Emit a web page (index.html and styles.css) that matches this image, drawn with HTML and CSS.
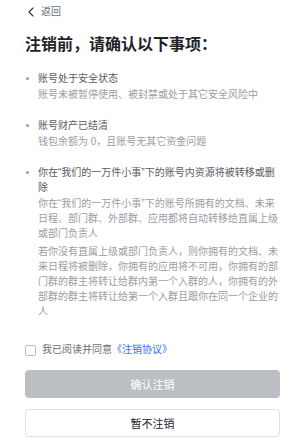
FILE: index.html
```html
<!DOCTYPE html>
<html lang="zh-CN">
<head>
<meta charset="utf-8">
<title>注销账号</title>
<link rel="stylesheet" href="styles.css">
</head>
<body>
<div class="page">
  <div class="back">
    <svg class="back-icon" width="6" height="10" viewBox="0 0 6 10"><path d="M5 1 L1 5 L5 9" fill="none" stroke="#333" stroke-width="1.1" stroke-linecap="round" stroke-linejoin="round"/></svg>
    <span class="back-text">返回</span>
  </div>
  <h1 class="title">注销前，请确认以下事项：</h1>
  <ul class="items">
    <li class="item">
      <div class="item-title">账号处于安全状态</div>
      <div class="item-desc"><p>账号未被暂停使用、被封禁或处于其它安全风险中</p></div>
    </li>
    <li class="item">
      <div class="item-title">账号财产已结清</div>
      <div class="item-desc"><p>钱包余额为 0，且账号无其它资金问题</p></div>
    </li>
    <li class="item">
      <div class="item-title">你在“我们的一万件小事”下的账号内资源将被转移或删除</div>
      <div class="item-desc">
        <p>你在“我们的一万件小事”下的账号所拥有的文档、未来日程、部门群、外部群、应用都将自动转移给直属上级或部门负责人</p>
        <p class="gap">若你没有直属上级或部门负责人，则你拥有的文档、未来日程将被删除，你拥有的应用将不可用，你拥有的部门群的群主将转让给群内第一个入群的人，你拥有的外部群的群主将转让给第一个入群且跟你在同一个企业的人</p>
      </div>
    </li>
  </ul>
  <label class="agree">
    <span class="checkbox"></span>
    <span class="agree-text">我已阅读并同意<span class="link">《注销协议》</span></span>
  </label>
  <div class="actions">
    <button class="btn btn-primary" disabled>确认注销</button>
    <button class="btn btn-default">暂不注销</button>
  </div>
</div>
</body>
</html>
```
FILE: styles.css
```css
* { box-sizing: border-box; }
html, body {
  margin: 0;
  padding: 0;
  background: #ffffff;
}
body {
  font-family: "Liberation Sans", "Noto Sans CJK SC", sans-serif;
  color: #1f2329;
}
.page {
  width: 300px;
  padding: 5px 20px 0 25px;
}
.back {
  display: flex;
  align-items: center;
  height: 14px;
  padding-left: 3px;
  gap: 7px;
}
.back-icon { display: block; }
.back-text {
  font-size: 10px;
  line-height: 14px;
  color: #6b6f75;
}
.title {
  margin: 15px 0 0 0;
  font-size: 16px;
  line-height: 22px;
  font-weight: bold;
  color: #1f2329;
}
.items {
  list-style: none;
  margin: 14.5px 0 0 0;
  padding: 0;
}
.item {
  position: relative;
  padding-left: 13px;
  font-size: 10px;
  line-height: 15px;
}
.item + .item { margin-top: 16px; }
.item::before {
  content: "";
  position: absolute;
  left: 1px;
  top: 6px;
  width: 3px;
  height: 3px;
  border-radius: 50%;
  background: #9a9da3;
}
.item-title { color: #575c63; }
.item-desc {
  margin-top: 1px;
  color: #9a9da3;
}
.item-desc p { margin: 0; }
.item-desc p.gap { margin-top: 3px; }
.agree {
  display: flex;
  align-items: center;
  gap: 6px;
  margin-top: 24.5px;
  height: 14px;
}
.checkbox {
  width: 11px;
  height: 11px;
  border: 1px solid #b8bcc2;
  border-radius: 2px;
  background: #fff;
}
.agree-text {
  font-size: 10px;
  line-height: 14px;
  color: #6b6f75;
}
.link { color: #3370ff; }
.actions {
  display: flex;
  flex-direction: column;
  gap: 11px;
  margin-top: 13px;
}
.btn {
  width: 255px;
  height: 28px;
  border-radius: 4px;
  font-family: "Liberation Sans", "Noto Sans CJK SC", sans-serif;
  font-size: 11px;
  padding: 0;
}
.btn-primary {
  background: #bbbfc4;
  border: none;
  color: #ffffff;
}
.btn-default {
  background: #ffffff;
  border: 1px solid #dee0e3;
  color: #1f2329;
}
```
